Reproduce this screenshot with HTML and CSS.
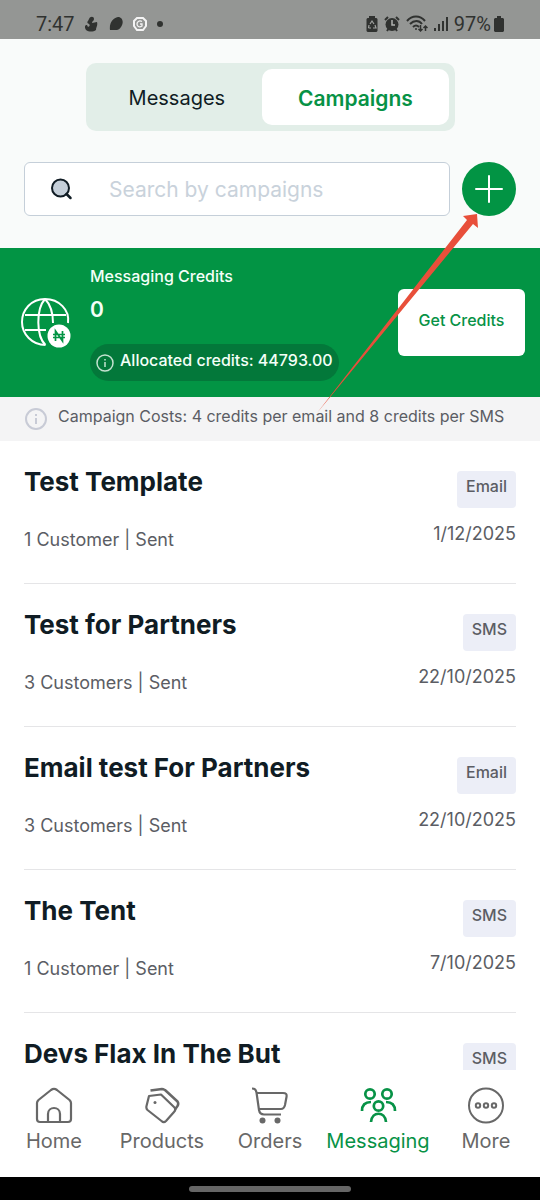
FILE: index.html
```html
<!DOCTYPE html>
<html lang="en">
<head>
<meta charset="utf-8">
<meta name="viewport" content="width=device-width, initial-scale=1">
<title>Campaigns</title>
<link rel="stylesheet" href="styles.css">
</head>
<body>
<div class="app">
  <div class="status">
    <div class="status-group status-left">
      <span>7:47</span>
      <svg width="14" height="16" viewBox="0 0 14 16" fill="#303230"><path d="M4 3c1-3 5-3 5 0 0 2-2 2-2 4l5-1c1 4-1 5-1 8-3 2-7 2-10 0-2-3-1-5 1-5l1 2c2-1 2-2 1-3-2-1-2-2-1-3z"/></svg>
      <svg width="14" height="16" viewBox="0 0 14 16" fill="#303230"><path d="M1 14C0 7 4 2 9 1c5 0 6 6 3 10-2 4-6 3-8 3z"/></svg>
      <svg width="14" height="16" viewBox="0 0 14 16" fill="none" stroke="#f4f4f4" stroke-width="2"><path d="M4 2h6l3 3v5l-3 4H4l-3-4V5z"/><path d="M9 5.500C6 4 4 6 4 8s2 4 5 2V8H7" stroke-width="1.300"/></svg>
      <svg width="6" height="16" viewBox="0 0 6 16" fill="#303230"><circle cx="3" cy="8" r="3"/></svg>
    </div>
    <div class="status-group status-right">
      <svg width="12" height="16" viewBox="0 0 12 16"><path d="M3 2V0h6v2h1.500l1 1v12l-1 1h-9l-1-1V3l1-1z" fill="#303230"/><path d="M4 8l2-3 2 3M9 9l1 3H7M2.500 12L3 9m-.5 3H5" fill="none" stroke="#a0a2a0" stroke-width="1.200"/></svg>
      <svg width="16" height="16" viewBox="0 0 16 16"><circle cx="8" cy="8.500" r="6.500" fill="#303230"/><path d="M1 4l3-3M12 1l3 3M3 15l2-3M13 15l-2-3" stroke="#303230" stroke-width="2"/><path d="M8 4v5h3" fill="none" stroke="#b0b2b0" stroke-width="1.500"/></svg>
      <svg width="22" height="18" viewBox="0 0 22 18" fill="none" stroke="#303230" stroke-width="2"><path d="M1 6c5-6 13-6 18 0M4 9c4-4 9-4 12 0M7 12c2-2 4-2 6 0"/><circle cx="10" cy="14" r="1" fill="#303230" stroke="none"/><path d="M14.500 10v6M12.500 14l2 2 2-2M19.500 16v-5M17.500 13l2-2 2 2" stroke-width="1.500"/></svg>
      <svg width="14" height="16" viewBox="0 0 14 16" stroke="#303230" stroke-width="2"><path d="M1 12v3M5 8v7M9 5v10M13 1v14"/></svg>
      <span class="battery">97%
        <svg width="10" height="16" viewBox="0 0 10 16" fill="#303230"><path d="M3 2V0h4v2h2l1 1v12l-1 1H1l-1-1V3l1-1z"/></svg>
      </span>
    </div>
  </div>

  <header class="header">
    <div class="tabs">
      <button class="tab" type="button">Messages</button>
      <button class="tab tab-active" type="button">Campaigns</button>
    </div>
    <div class="search-row">
      <label class="search">
        <svg width="22" height="22" viewBox="0 0 22 22" stroke="#101c24" stroke-width="2" stroke-linecap="round"><circle cx="9.500" cy="10" r="8.500" fill="#c5cfd9"/><path d="M15.500 16l4 4" stroke-width="2.500"/></svg>
        <input class="search-input" type="text" placeholder="Search by campaigns" aria-label="Search by campaigns">
      </label>
      <button class="add" type="button" aria-label="New campaign">
        <svg width="28" height="28" viewBox="0 0 28 28" stroke="#fff" stroke-width="2" stroke-linecap="round"><path d="M14 1v26M1 14h26"/></svg>
      </button>
    </div>
  </header>

  <section class="credits">
    <svg class="globe" width="50" height="50" viewBox="0 0 50 50" fill="none" stroke="#fff" stroke-width="2"><path d="M47 25C49 12 38 1 24 1S1 12 1 24s10 23 23.500 23M4 17h41M4 32h21M24 1C15 11 15 38 24.500 47M24 1c5 5 8 14 8 24"/><circle cx="38" cy="38" r="11.500" fill="#fff" stroke="none"/><path d="M34.500 43V33l7 10V33M32 36.500h12M32 39.500h12" stroke="#029444" stroke-width="1.700"/></svg>
    <div class="credits-info">
      <div class="credits-label">Messaging Credits</div>
      <div class="credits-value">0</div>
      <div class="allocated">
        <svg width="18" height="18" viewBox="0 0 18 18" fill="none" stroke="#c4e2d0" stroke-width="1.500"><circle cx="9" cy="9" r="8"/><path d="M9 8v5M9 5v1.500"/></svg>
        <span>Allocated credits: 44793.00</span>
      </div>
    </div>
    <button class="get" type="button">Get Credits</button>
  </section>

  <div class="costs">
    <svg width="22" height="22" viewBox="0 0 22 22" fill="none" stroke="#c8cbd6" stroke-width="2"><circle cx="11" cy="11" r="10"/><path d="M11 10v6M11 6v2"/></svg>
    <span>Campaign Costs: 4 credits per email and 8 credits per SMS</span>
  </div>

  <main class="list">
    <article class="item">
      <div class="item-main"><h2 class="title">Test Template</h2><p class="meta">1 Customer | Sent</p></div>
      <div class="item-side"><span class="badge">Email</span><time class="date">1/12/2025</time></div>
    </article>
    <article class="item">
      <div class="item-main"><h2 class="title">Test for Partners</h2><p class="meta">3 Customers | Sent</p></div>
      <div class="item-side"><span class="badge">SMS</span><time class="date">22/10/2025</time></div>
    </article>
    <article class="item">
      <div class="item-main"><h2 class="title">Email test For Partners</h2><p class="meta">3 Customers | Sent</p></div>
      <div class="item-side"><span class="badge">Email</span><time class="date">22/10/2025</time></div>
    </article>
    <article class="item">
      <div class="item-main"><h2 class="title">The Tent</h2><p class="meta">1 Customer | Sent</p></div>
      <div class="item-side"><span class="badge">SMS</span><time class="date">7/10/2025</time></div>
    </article>
    <article class="item">
      <div class="item-main"><h2 class="title">Devs Flax In The But</h2></div>
      <div class="item-side"><span class="badge">SMS</span></div>
    </article>
  </main>

  <nav class="nav">
    <a class="nav-item" href="#home">
      <svg width="38" height="38" viewBox="0 0 38 38" fill="none" stroke="#686868" stroke-width="2.200"><path d="M2 17c0-1 .5-2 1.500-3L16 4c2-1.500 4-1.500 6 0l12.500 10c1 1 1.500 2 1.500 3v16c0 2-1 3-3 3H5c-2 0-3-1-3-3zM13 36v-8c0-8 12-8 12 0v8"/></svg>
      <span>Home</span>
    </a>
    <a class="nav-item" href="#products">
      <svg width="38" height="38" viewBox="0 0 38 38" fill="none" stroke="#686868" stroke-width="2.200" stroke-linejoin="round"><path d="M6 10l12-1.500L31 21c1.500 1.500 1.500 3.500 0 5l-8 9c-1.500 1.500-3 1.500-4.500 0L4.500 24c-1-1-1.500-2-1-4z"/><path d="M7.500 4.500L19 3c1 0 2 .5 3 1l12.500 11.500c1 1.500 1 3 0 4.500L32 23.500" stroke-width="2.500"/><circle cx="12" cy="16.500" r="1.500" fill="#686868" stroke="none"/></svg>
      <span>Products</span>
    </a>
    <a class="nav-item" href="#orders">
      <svg width="38" height="38" viewBox="0 0 38 38" fill="none" stroke="#686868" stroke-width="2.200"><path d="M1 2.500c3 0 4 1 4.500 4L8 24c.5 3 2 4.500 5 4.500h17M6 7h26c3 0 4 1 3.500 4L34 19c-.5 2-2 4-4 4H8"/><circle cx="11.500" cy="34.500" r="3" fill="#686868" stroke="none"/><circle cx="26.500" cy="34.500" r="3" fill="#686868" stroke="none"/></svg>
      <span>Orders</span>
    </a>
    <a class="nav-item nav-active" href="#messaging">
      <svg width="38" height="38" viewBox="0 0 38 38" fill="none" stroke="#079246" stroke-width="2.700"><circle cx="11" cy="8" r="4.700"/><circle cx="28" cy="8" r="4.700"/><circle cx="19.500" cy="20" r="4.700"/><path d="M3 25c0-6 3-9 9-9M27 16c6 0 9 3 9 9M12 36c1-11 14-11 15 0"/></svg>
      <span>Messaging</span>
    </a>
    <a class="nav-item" href="#more">
      <svg width="38" height="38" viewBox="0 0 38 38" fill="none" stroke="#686868" stroke-width="2"><circle cx="19" cy="19.500" r="17"/><circle cx="11" cy="19.500" r="2.200"/><circle cx="19" cy="19.500" r="2.200"/><circle cx="27" cy="19.500" r="2.200"/></svg>
      <span>More</span>
    </a>
  </nav>
  <div class="gesture"><div class="gesture-bar"></div></div>

  <svg class="pointer" width="162" height="200" viewBox="0 0 162 200" fill="#e84f3a"><path d="M160 0l1 14-5-4L0 199 150 6l-4-4z"/></svg>
</div>
</body>
</html>
```
FILE: styles.css
```css
* { box-sizing: border-box; }

body {
  margin: 0;
  font-family: Inter, "Liberation Sans", sans-serif;
  color: #5b5d64;
  background: #fff;
}

button { border: 0; padding: 0; font: inherit; cursor: pointer; }
svg { flex: none; display: block; }

.app {
  position: relative;
  display: flex;
  flex-direction: column;
  height: 100vh;
  overflow: hidden;
}

.status {
  display: flex;
  justify-content: space-between;
  padding: 12px 36px 3px;
  background: #949694;
  color: #303230;
  font-family: Roboto, sans-serif;
  font-size: 20px;
  line-height: 24px;
}
.status-group { display: flex; align-items: center; }
.status-left { gap: 10px; }
.status-right { gap: 6px; }
.battery { display: flex; align-items: center; gap: 3px; }

.header {
  display: flex;
  flex-direction: column;
  gap: 31px;
  padding: 24px 24px 32px;
  background: #f9fbfa;
}
.tabs {
  display: flex;
  align-self: center;
  width: 75%;
  padding: 6px;
  border-radius: 10px;
  background: #e2eee8;
}
.tab {
  flex: 11 1 0;
  height: 56px;
  padding-top: 2px;
  border-radius: 10px;
  background: transparent;
  color: #101c24;
  font-size: 20px;
}
.tab-active {
  flex-grow: 12;
  background: #fff;
  color: #079246;
  font-size: 21px;
  font-weight: 600;
}

.search-row { display: flex; align-items: center; gap: 12px; }
.search {
  flex: 1;
  display: flex;
  align-items: center;
  gap: 36px;
  min-width: 0;
  height: 54px;
  padding: 0 26px;
  border: 1px solid #c5cfd9;
  border-radius: 6px;
  background: #fff;
}
.search-input {
  flex: 1;
  min-width: 0;
  padding: 0;
  border: 0;
  outline: 0;
  background: none;
  color: #101c24;
  font: inherit;
  font-size: 21px;
}
.search-input::placeholder { color: #c9d2db; opacity: 1; }
.add {
  flex: none;
  display: grid;
  place-items: center;
  width: 54px;
  height: 54px;
  border-radius: 50%;
  background: #029444;
}

.credits {
  display: flex;
  align-items: center;
  gap: 19px;
  padding: 16px 15px 16px 21px;
  background: #029444;
  color: #f4fff8;
}
.credits-info { flex: 1; font-weight: 500; }
.credits-label { font-size: 16px; line-height: 24px; }
.credits-value { font-size: 21px; font-weight: 600; line-height: 32px; margin-top: 6px; }
.allocated {
  display: inline-flex;
  align-items: center;
  gap: 6px;
  height: 37px;
  margin-top: 18px;
  padding: 0 6px;
  border-radius: 20px;
  background: #03783a;
  font-size: 16px;
  white-space: nowrap;
}
.allocated span { padding-bottom: 5px; }
.get {
  width: 127px;
  height: 67px;
  padding-bottom: 6px;
  border-radius: 6px;
  background: #fff;
  color: #079246;
  font-size: 16px;
  font-weight: 500;
}

.costs {
  display: flex;
  align-items: center;
  gap: 11px;
  min-height: 44px;
  padding: 0 24px 0 25px;
  background: #f4f4f5;
  font-size: 16px;
}
.costs span { padding-bottom: 6px; }

.list { flex: 1; min-height: 0; overflow: hidden; padding: 0 24px; }
.item {
  display: flex;
  justify-content: space-between;
  height: 143px;
  padding-top: 23px;
  border-bottom: 1px solid #e5e5e7;
}
.title {
  margin: 0;
  color: #101c24;
  font-size: 26px;
  font-weight: 700;
  line-height: 36px;
}
.meta { margin: 27px 0 0; font-size: 18px; line-height: 26px; }
.item-side {
  display: flex;
  flex-direction: column;
  align-items: flex-end;
  gap: 13px;
  padding-top: 7px;
}
.badge {
  height: 37px;
  padding: 3px 9px 10px;
  border-radius: 4px;
  background: #eceef7;
  font-size: 16px;
  font-weight: 500;
  line-height: 24px;
}
.date { font-size: 18px; line-height: 26px; }

.nav {
  display: grid;
  grid-template-columns: repeat(5, 1fr);
  padding: 16px 0 23px;
  background: #fff;
}
.nav-item {
  display: flex;
  flex-direction: column;
  align-items: center;
  gap: 4px;
  color: #686868;
  font-size: 20px;
  line-height: 26px;
  text-decoration: none;
}
.nav-active { color: #079246; }

.gesture { display: flex; justify-content: center; padding: 9px 0 8px; background: #000; }
.gesture-bar { width: 30%; height: 6px; border-radius: 3px; background: #666; }

.pointer { position: absolute; top: 214px; right: 61px; pointer-events: none; }
```
